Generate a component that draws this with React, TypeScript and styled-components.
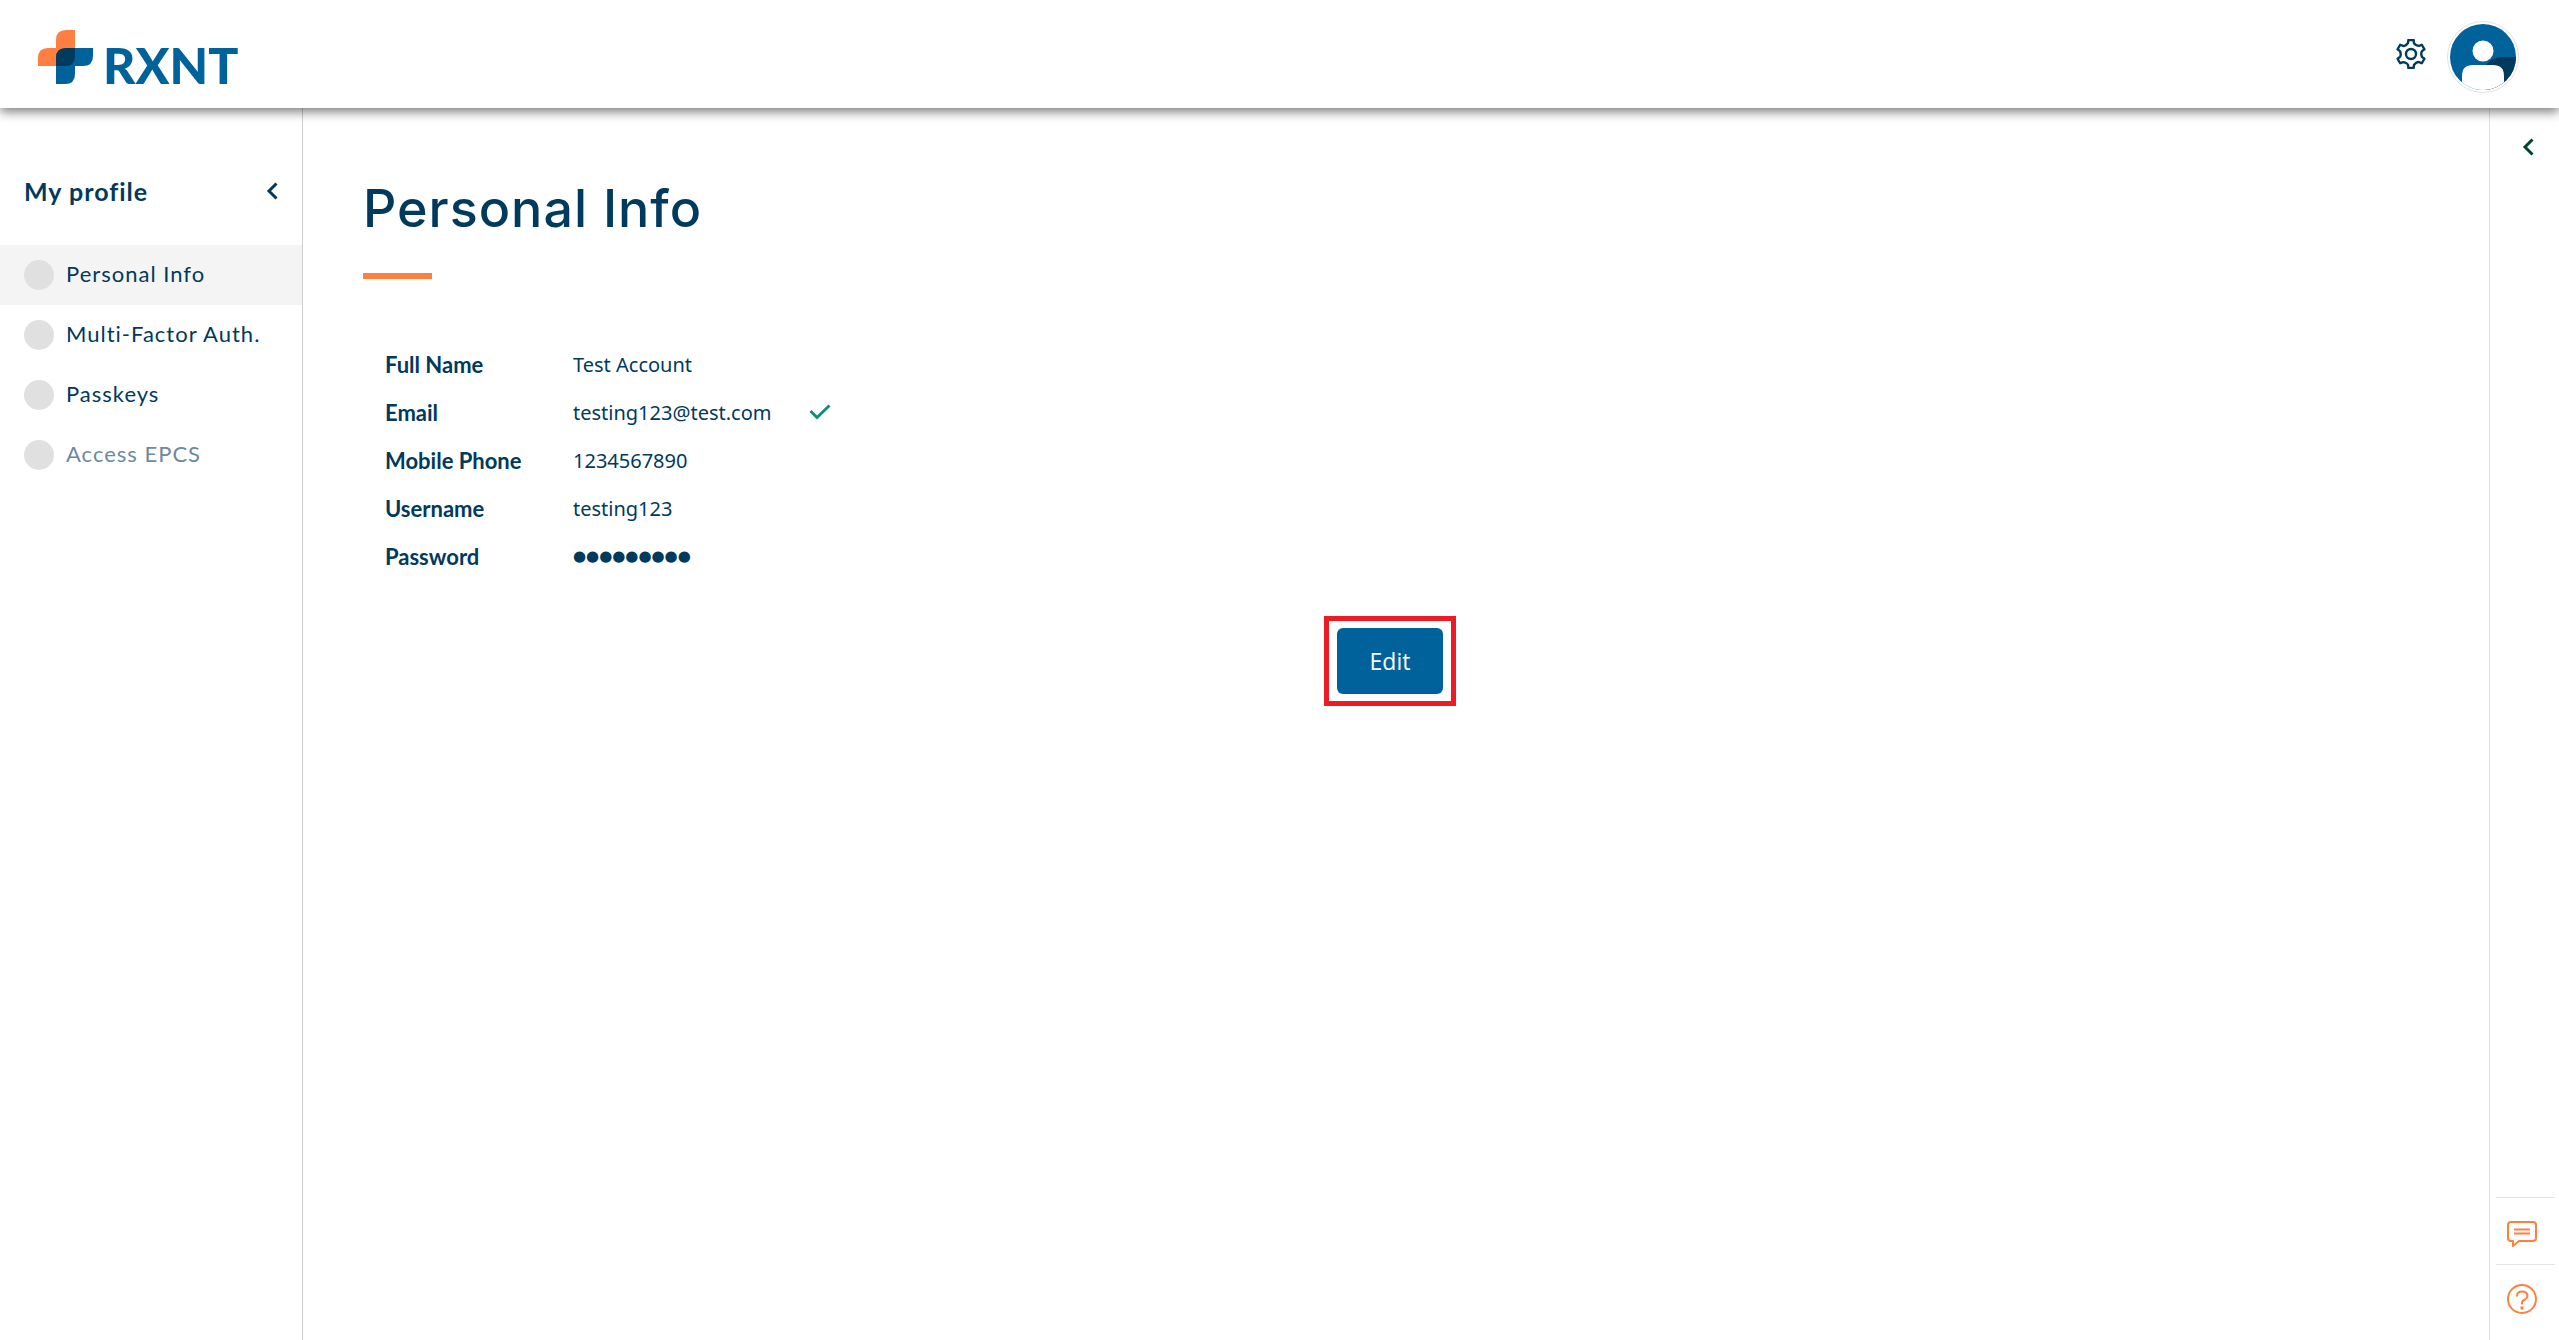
import React from 'react';
import styled, { createGlobalStyle } from 'styled-components';

const color = {
  navy: '#003a5d',
  blue: '#00629b',
  orange: '#ff7f41',
  green: '#0f8f75',
  line: '#cfcfcf',
  railLine: '#e2e2e2',
};

const GlobalStyle = createGlobalStyle`
  * { box-sizing: border-box; }
  body {
    margin: 0;
    background: #ffffff;
    color: ${color.navy};
    font-family: Lato, "Noto Sans", sans-serif;
    font-size: 22px;
  }
`;

const Page = styled.div`
  display: flex;
  flex-direction: column;
  min-height: 100vh;
`;

const Header = styled.header`
  display: flex;
  align-items: center;
  justify-content: space-between;
  height: 108px;
  padding: 6px 40px 0 38px;
  background: #ffffff;
  box-shadow: 0 4px 10px rgba(0, 0, 0, 0.5);
  z-index: 1;
`;

const Brand = styled.a`
  display: flex;
  align-items: flex-end;
  gap: 10px;
  color: ${color.blue};
  text-decoration: none;
`;

const BrandName = styled.span`
  font-size: 50px;
  line-height: 38px;
  font-weight: 900;
`;

const HeaderTools = styled.div`
  display: flex;
  align-items: flex-start;
  gap: 21px;
`;

const IconButton = styled.button`
  display: flex;
  padding: 0;
  border: 0;
  background: none;
  color: inherit;
  cursor: pointer;
`;

const SettingsButton = styled(IconButton)`
  padding-top: 18px;
`;

const Body = styled.div`
  display: flex;
  flex: 1;
`;

const Sidebar = styled.aside`
  width: 303px;
  flex-shrink: 0;
  padding-top: 56px;
  border-right: 1px solid ${color.line};
`;

const SidebarHead = styled.div`
  display: flex;
  align-items: center;
  justify-content: space-between;
  height: 54px;
  margin-bottom: 27px;
  padding: 0 24px;
`;

const SidebarTitle = styled.h2`
  margin: 0;
  font-size: 25px;
  font-weight: 700;
  letter-spacing: 1px;
`;

const NavItem = styled.a<{ $active?: boolean; $disabled?: boolean }>`
  display: flex;
  align-items: center;
  gap: 12px;
  height: 60px;
  padding: 0 24px;
  background: ${(p) => (p.$active ? '#f4f4f4' : 'transparent')};
  color: ${(p) => (p.$disabled ? '#6b8aa0' : color.navy)};
  font-size: 22px;
  letter-spacing: 1px;
  white-space: nowrap;
  text-decoration: none;
`;

const NavText = styled.span`
  padding-bottom: 3px;
`;

const Dot = styled.span`
  width: 30px;
  height: 30px;
  flex-shrink: 0;
  border-radius: 50%;
  background: #e0e0e0;
`;

const Main = styled.main`
  flex: 1;
  padding: 66px 72px 60px 60px;
`;

const Title = styled.h1`
  margin: 0;
  padding-bottom: 29px;
  font-family: Inter, "Noto Sans", sans-serif;
  font-size: 52px;
  line-height: 70px;
  font-weight: 500;
  letter-spacing: 1px;
`;

const TitleRule = styled.hr`
  width: 69px;
  height: 6px;
  margin: 0 0 61px;
  border: 0;
  background: ${color.orange};
`;

const Fields = styled.dl`
  display: grid;
  grid-template-columns: 187px 1fr;
  grid-auto-rows: 48px;
  align-items: center;
  margin: 0;
  padding-left: 22px;
`;

const Label = styled.dt`
  font-weight: 700;
`;

const Value = styled.dd`
  display: flex;
  align-items: center;
  gap: 38px;
  margin: 0;
  padding-left: 1px;
  font-family: "Noto Sans", sans-serif;
  font-size: 20px;
`;

const Mask = styled.span`
  font-family: "DejaVu Sans", sans-serif;
  font-size: 15px;
`;

const Actions = styled.div`
  display: flex;
  justify-content: center;
  padding-top: 36px;
`;

const Highlight = styled.div`
  padding: 7px 8px;
  border: 5px solid #ed1c24;
`;

const EditButton = styled.button`
  display: block;
  width: 106px;
  height: 66px;
  border: 0;
  border-radius: 6px;
  background: ${color.blue};
  color: #ffffff;
  font-family: "Open Sans", "Noto Sans", sans-serif;
  font-size: 23px;
  cursor: pointer;
`;

const Rail = styled.aside`
  display: flex;
  flex-direction: column;
  justify-content: space-between;
  width: 70px;
  flex-shrink: 0;
  padding: 30px 4px 9px 6px;
  border-left: 1px solid ${color.railLine};
`;

const RailTop = styled.div`
  display: flex;
  justify-content: flex-end;
  padding-right: 21px;
  color: #00452f;
`;

const RailItem = styled.div`
  display: flex;
  align-items: flex-start;
  height: 67px;
  padding: 19px 0 0 11px;
  border-top: 1px solid ${color.railLine};
  color: ${color.orange};
`;

const Svg = styled.svg`
  display: block;
  fill: none;
  stroke: currentColor;
`;

const LogoMark = () => (
  <Svg width="55" height="54" viewBox="0 0 55 54" aria-hidden="true">
    <g stroke="none">
      <path d="M18 18V10Q18 0 28 0H37V26Q37 36 27 36H0V28Q0 18 10 18Z" fill={color.orange} />
      <path d="M28 18H55V26Q55 36 45 36H37V44Q37 54 27 54H18V28Q18 18 28 18Z" fill={color.blue} />
      <path d="M28 18H37V26Q37 36 27 36H18V28Q18 18 28 18Z" fill={color.navy} />
    </g>
  </Svg>
);

const gearOutline = Array.from({ length: 6 }, (_, k) => {
  const turn = (k * Math.PI) / 3;
  const at = (x: number, y: number) =>
    `${(15 + x * Math.cos(turn) - y * Math.sin(turn)).toFixed(2)} ${(15 + x * Math.sin(turn) + y * Math.cos(turn)).toFixed(2)}`;
  return `${k ? 'L' : 'M'}${at(-2.6, -14)}L${at(2.6, -14)}L${at(3, -11)}Q${at(3.4, -9.8)} ${at(5, -9)}Q${at(6.6, -8.2)} ${at(8, -8.1)}`;
}).join('');

const GearIcon = () => (
  <Svg width="30" height="30" viewBox="0 0 30 30" strokeWidth="2.4" strokeLinejoin="round" aria-hidden="true">
    <path d={`${gearOutline}Z`} />
    <circle cx="15" cy="15" r="5" />
  </Svg>
);

const AvatarIcon = () => (
  <Svg width="72" height="72" viewBox="0 0 72 72" aria-hidden="true">
    <clipPath id="avatar-disc">
      <circle cx="36" cy="36" r="33" />
    </clipPath>
    <circle cx="36" cy="36" r="35.5" fill="#ffffff" stroke="#e2e2e2" />
    <g clipPath="url(#avatar-disc)" stroke="none">
      <rect width="72" height="72" fill={color.blue} />
      <path d="M38 46Q44 36 54 36H72V72H38Z" fill={color.navy} />
      <circle cx="36" cy="30" r="10.5" fill="#ffffff" />
      <path d="M15 72V55Q15 44 26 44H46Q57 44 57 55V72Z" fill="#ffffff" />
    </g>
  </Svg>
);

const Chevron = () => (
  <Svg width="12" height="18" viewBox="0 0 12 18" strokeWidth="3" aria-hidden="true">
    <path d="M10.5 1.5L3 9L10.5 16.5" />
  </Svg>
);

const CheckIcon = () => (
  <Svg width="22" height="16" viewBox="0 0 22 16" strokeWidth="3" color={color.green} role="img" aria-label="Verified">
    <path d="M1.5 7L8 13.5L20.5 1.5" />
  </Svg>
);

const ChatIcon = () => (
  <Svg width="30" height="34" viewBox="0 0 30 34" strokeWidth="2" strokeLinejoin="round" aria-hidden="true">
    <path d="M4 5H26Q29 5 29 8V21Q29 24 26 24H12L6 29V24H4Q1 24 1 21V8Q1 5 4 5Z" />
    <path d="M7 12.500H23M7 16.500H23" />
  </Svg>
);

const HelpIcon = () => (
  <Svg width="30" height="30" viewBox="0 0 30 30" strokeWidth="2" aria-hidden="true">
    <circle cx="15" cy="15" r="14" />
    <path d="M10 12.5V11.5Q10.5 7.5 15 7.5Q20.5 7.5 20.5 12Q20.5 14 18 15.5Q15 17 15 18.5V20.5" />
    <path d="M15 22.5V25.5" strokeWidth="3" />
  </Svg>
);

const navItems = [
  { name: 'Personal Info', active: true },
  { name: 'Multi-Factor Auth.' },
  { name: 'Passkeys' },
  { name: 'Access EPCS', disabled: true },
];

const fields: { label: string; value: React.ReactNode; verified?: boolean }[] = [
  { label: 'Full Name', value: 'Test Account' },
  { label: 'Email', value: 'testing123@test.com', verified: true },
  { label: 'Mobile Phone', value: '1234567890' },
  { label: 'Username', value: 'testing123' },
  { label: 'Password', value: <Mask>●●●●●●●●●</Mask> },
];

export default function App() {
  return (
    <Page>
      <GlobalStyle />
      <Header>
        <Brand href="#home">
          <LogoMark />
          <BrandName>RXNT</BrandName>
        </Brand>
        <HeaderTools>
          <SettingsButton type="button" aria-label="Settings">
            <GearIcon />
          </SettingsButton>
          <IconButton type="button" aria-label="Account">
            <AvatarIcon />
          </IconButton>
        </HeaderTools>
      </Header>
      <Body>
        <Sidebar>
          <SidebarHead>
            <SidebarTitle>My profile</SidebarTitle>
            <IconButton type="button" aria-label="Collapse menu">
              <Chevron />
            </IconButton>
          </SidebarHead>
          <nav aria-label="My profile">
            {navItems.map((item) => (
              <NavItem
                key={item.name}
                href="#profile"
                $active={item.active}
                $disabled={item.disabled}
                aria-current={item.active ? 'page' : undefined}
                aria-disabled={item.disabled}
              >
                <Dot />
                <NavText>{item.name}</NavText>
              </NavItem>
            ))}
          </nav>
        </Sidebar>
        <Main>
          <Title>Personal Info</Title>
          <TitleRule />
          <Fields>
            {fields.map((field) => (
              <React.Fragment key={field.label}>
                <Label>{field.label}</Label>
                <Value>
                  {field.value}
                  {field.verified && <CheckIcon />}
                </Value>
              </React.Fragment>
            ))}
          </Fields>
          <Actions>
            <Highlight>
              <EditButton type="button">Edit</EditButton>
            </Highlight>
          </Actions>
        </Main>
        <Rail>
          <RailTop>
            <IconButton type="button" aria-label="Expand panel">
              <Chevron />
            </IconButton>
          </RailTop>
          <div>
            <RailItem>
              <IconButton type="button" aria-label="Chat">
                <ChatIcon />
              </IconButton>
            </RailItem>
            <RailItem>
              <IconButton type="button" aria-label="Help">
                <HelpIcon />
              </IconButton>
            </RailItem>
          </div>
        </Rail>
      </Body>
    </Page>
  );
}
